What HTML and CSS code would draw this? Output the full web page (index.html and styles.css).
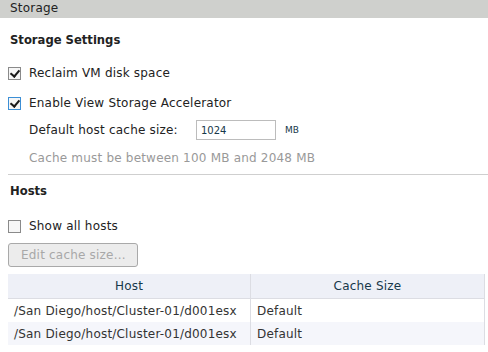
FILE: index.html
```
<!DOCTYPE html>
<html>
<head>
<meta charset="utf-8">
<link rel="stylesheet" href="styles.css">
</head>
<body>
<div class="titlebar">Storage</div>
<div class="content">
  <div class="section-title">Storage Settings</div>
  <label class="check-row first"><span class="cb checked"></span><span>Reclaim VM disk space</span></label>
  <label class="check-row second"><span class="cb checked focus"></span><span>Enable View Storage Accelerator</span></label>
  <div class="field-row">
    <span class="field-label">Default host cache size:</span>
    <span class="input">1024</span>
    <span class="unit">MB</span>
  </div>
  <div class="hint">Cache must be between 100 MB and 2048 MB</div>
</div>
<div class="separator"></div>
<div class="content">
  <div class="section-title hosts">Hosts</div>
  <label class="check-row third"><span class="cb"></span><span>Show all hosts</span></label>
  <div class="button">Edit cache size...</div>
  <table class="grid">
    <thead>
      <tr><th class="col-host">Host</th><th>Cache Size</th></tr>
    </thead>
    <tbody>
      <tr><td class="col-host">/San Diego/host/Cluster-01/d001esx</td><td>Default</td></tr>
      <tr class="alt"><td class="col-host">/San Diego/host/Cluster-01/d001esx</td><td>Default</td></tr>
    </tbody>
  </table>
</div>
</body>
</html>
```
FILE: styles.css
```
html, body {
  margin: 0;
  padding: 0;
  background: #fff;
  font-family: "DejaVu Sans", Verdana, sans-serif;
  font-size: 12px;
  letter-spacing: 0.2px;
  color: #222;
  overflow: hidden;
}
.titlebar {
  height: 18px;
  line-height: 17px;
  background: #cfd0cd;
  padding-left: 10px;
  color: #222;
}
.content {
  padding: 0 0 0 8px;
}
.section-title {
  font-weight: bold;
  font-size: 11.6px;
  letter-spacing: 0;
  padding: 14px 0 0 2px;
  height: 21px;
  line-height: 16px;
}
.section-title.hosts {
  padding-top: 8px;
  height: 23px;
}
.check-row {
  display: flex;
  align-items: center;
  gap: 8px;
  height: 16px;
}
.check-row.first {
  margin-top: 12px;
}
.check-row.second {
  margin-top: 14px;
}
.check-row.third {
  margin-top: 12px;
}
.cb {
  box-sizing: border-box;
  width: 13px;
  height: 13px;
  border: 1px solid #8a8a8a;
  background: #f6f6f6;
  position: relative;
}
.cb.focus {
  border-color: #3c8fd6;
}
.cb.checked::after {
  content: "";
  position: absolute;
  left: 3px;
  top: 0px;
  width: 4px;
  height: 7px;
  border: solid #1a1a1a;
  border-width: 0 2px 2px 0;
  transform: rotate(40deg);
}
.field-row {
  display: flex;
  align-items: center;
  padding-left: 21px;
  margin-top: 9px;
  height: 20px;
}
.field-label {
  width: 167px;
}
.input {
  box-sizing: border-box;
  width: 80px;
  height: 20px;
  border: 1px solid #bcbcbc;
  font-size: 10px;
  letter-spacing: 0;
  color: #17384a;
  padding: 4px 0 0 4px;
  line-height: 12px;
}
.unit {
  font-size: 9px;
  letter-spacing: 0;
  color: #17384a;
  margin-left: 9px;
}
.hint {
  color: #999;
  padding-left: 21px;
  margin-top: 10px;
  height: 16px;
  line-height: 16px;
}
.separator {
  margin: 8px 0 0 8px;
  border-top: 1px solid #cfcfcf;
}
.button {
  box-sizing: border-box;
  width: 130px;
  height: 24px;
  margin-top: 9px;
  border: 1px solid #a9a9a9;
  border-radius: 3px;
  background: #ececec;
  color: #a8a8a8;
  line-height: 22px;
  padding-left: 12px;
}
.grid {
  margin-top: 7px;
  width: 477px;
  border-collapse: collapse;
  table-layout: fixed;
}
.grid th, .grid td {
  border-right: 1px solid #dcdde3;
  height: 23px;
  padding: 0 0 0 6px;
  text-align: left;
  white-space: nowrap;
  overflow: hidden;
}
.grid th {
  font-weight: normal;
  text-align: center;
  background: #eef0f7;
  color: #17384a;
  height: 24px;
  padding: 0;
  border-bottom: 1px solid #dcdde3;
}
.grid .col-host {
  width: 242px;
  padding-right: 0;
}
.grid td {
  color: #333;
}
.grid tr.alt td {
  background: #f5f6fb;
}
```
